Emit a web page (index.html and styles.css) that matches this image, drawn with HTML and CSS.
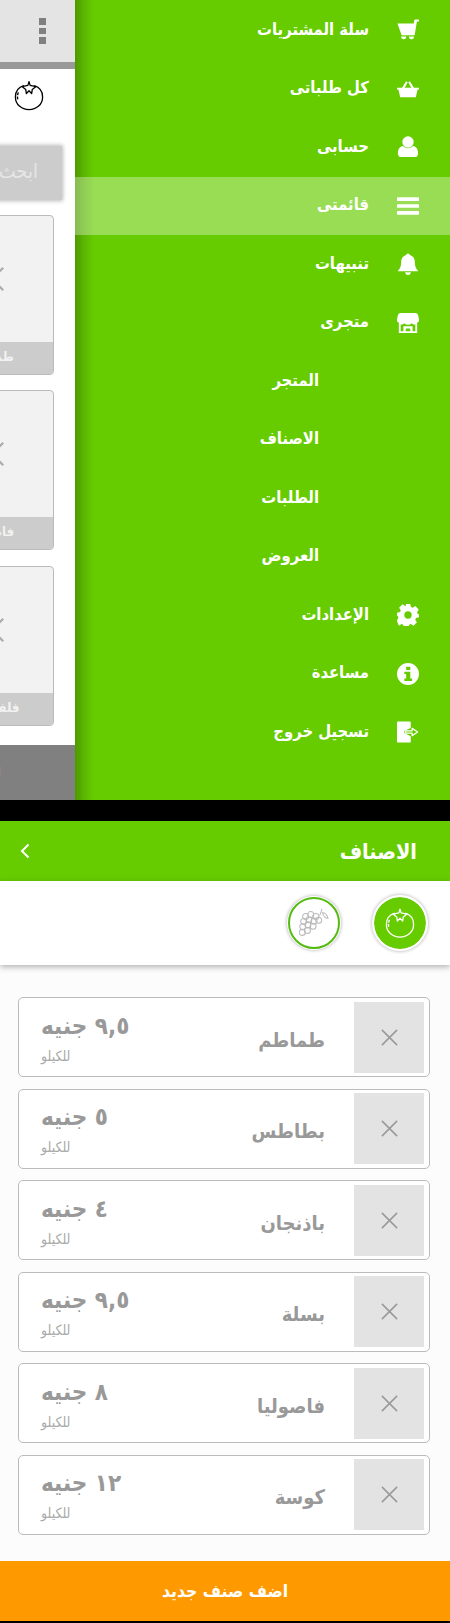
FILE: index.html
```html
<!DOCTYPE html>
<html lang="ar" dir="rtl">
<head>
<meta charset="utf-8">
<title>الاصناف</title>
<link rel="stylesheet" href="styles.css">
</head>
<body>
<svg class="defs" width="0" height="0" aria-hidden="true">
  <symbol id="tomato" viewBox="0 0 32 32">
    <path d="M10.500 5.500C5 7.200 1.500 11.500 1.500 17.500 1.500 25.500 8 31 16 31s14.500-5.500 14.500-13.500C30.500 11.500 27 7.200 21.500 5.500" fill="none" stroke="currentColor" stroke-width="1.400"/>
    <path d="M16 1.200l-1.200 4-6.300 1.300 4 3 .7 4.500 2.800-3 2.800 3 .7-4.500 4-3-6.300-1.300z" fill="none" stroke="currentColor" stroke-width="1.400" stroke-linejoin="round"/>
    <path d="M4 20c-.6-3-.3-5.500 1-8" fill="none" stroke="currentColor" stroke-width="1.400" stroke-dasharray="3 1.500"/>
  </symbol>
  <symbol id="x" viewBox="0 0 20 20">
    <path d="M2 2l16 16M18 2L2 18" fill="none" stroke="currentColor" stroke-width="1.600"/>
  </symbol>
</svg>

<section class="drawer">
  <aside class="under">
    <div class="under-bar"><span class="dots"><i></i><i></i><i></i></span></div>
    <div class="under-line"></div>
    <div class="under-body">
      <svg class="under-tomato"><use href="#tomato"/></svg>
      <div class="search">ابحث</div>
      <div class="tile"><div class="tile-img"><svg class="tile-x"><use href="#x"/></svg></div><div class="tile-cap">طماطم</div></div>
      <div class="tile"><div class="tile-img"><svg class="tile-x"><use href="#x"/></svg></div><div class="tile-cap">فاصوليا</div></div>
      <div class="tile"><div class="tile-img"><svg class="tile-x"><use href="#x"/></svg></div><div class="tile-cap">فلفل حار</div></div>
    </div>
    <div class="under-foot"><span>اضف</span></div>
  </aside>

  <nav class="menu">
    <a class="row">
      <svg class="ico" viewBox="0 0 24 24"><path d="M24 .5v2.300h-2.300l-2.300 14c-.1.600-.6 1-1.200 1H5L.5 5h17.800l.5-3.300c.1-.700.600-1.200 1.300-1.200zM4.500 19h5.500a2.800 2.800 0 0 1-5.500 1zm8.500 0h5.500a2.800 2.800 0 0 1-5.500 1z"/></svg>
      <span>سلة المشتريات</span>
    </a>
    <a class="row">
      <svg class="ico" viewBox="0 0 24 24"><path d="M0 10.500h5.500L10 3.500l1.700 1.200-3.300 5.800h7.200l-3.300-5.800L14 3.500l4.500 7H24v2h-1.500L20.500 21h-17L1.500 12.500H0z"/></svg>
      <span>كل طلباتى</span>
    </a>
    <a class="row">
      <svg class="ico" viewBox="0 0 24 24"><circle cx="12" cy="6.500" r="6.200"/><path d="M1 19c0-4.500 2-7.500 5.500-8 3 3 8 3 11 0 3.500.500 5.500 3.500 5.500 8 0 2.500-1.500 4-3.500 4h-15C2.500 23 1 21.500 1 19z"/></svg>
      <span>حسابى</span>
    </a>
    <a class="row active">
      <svg class="ico" viewBox="0 0 24 24"><rect y="2.500" width="24" height="4" rx=".5"/><rect y="10" width="24" height="4" rx=".5"/><rect y="17.500" width="24" height="4" rx=".5"/></svg>
      <span>قائمتى</span>
    </a>
    <a class="row">
      <svg class="ico" viewBox="0 0 24 24"><path d="M12 .5a2 2 0 0 1 2 1.800c3.500.800 5.500 3.700 5.500 7.700 0 5 1.500 7 3.500 9.500v.5H1v-.5C3 17 4.500 15 4.500 10c0-4 2-6.900 5.500-7.700A2 2 0 0 1 12 .5zM9 21h6a3 3 0 0 1-6 0z"/></svg>
      <span>تنبيهات</span>
    </a>
    <a class="row">
      <svg class="ico" viewBox="0 0 24 24"><path fill-rule="evenodd" d="M4 1h16a3 3 0 0 1 3 2.500L24 8a3 3 0 0 1-2 3.500V23H2V11.500A3 3 0 0 1 0 8l1-4.500A3 3 0 0 1 4 1zm0 12.500V21h3v-5.500h10V21h3v-7.500a4 4 0 0 1-4-1.300 5.500 5.500 0 0 1-8 0 4 4 0 0 1-4 1.300zM9.500 18v3h5v-3z"/></svg>
      <span>متجرى</span>
    </a>
    <a class="row sub"><span>المتجر</span></a>
    <a class="row sub"><span>الاصناف</span></a>
    <a class="row sub"><span>الطلبات</span></a>
    <a class="row sub"><span>العروض</span></a>
    <a class="row">
      <svg class="ico" viewBox="0 0 24 24"><path fill-rule="evenodd" d="M9.500 0h5l.7 3.300 1.900.8L20 2.300 23.700 6l-1.800 2.900.8 1.900L24 11.500v3l-3.300.7-.8 1.900 1.800 2.900-3.700 3.700-2.900-1.800-1.900.8-.7 3.300h-5l-.7-3.300-1.900-.8-2.900 1.800L-.2 18l1.800-2.900-.8-1.900L0 12.500v-3l3.300-.7.800-1.900L2.300 4 6 .3l2.900 1.800 1-.4zM12 8a4 4 0 1 0 0 8 4 4 0 0 0 0-8z"/></svg>
      <span>الإعدادات</span>
    </a>
    <a class="row">
      <svg class="ico" viewBox="0 0 24 24"><path fill-rule="evenodd" d="M12 0a12 12 0 1 1 0 24 12 12 0 0 1 0-24zM10 4v3.500h4.500V4zM8 9.500V12h2v5H8v2.500h8.500V17h-2V9.500z"/></svg>
      <span>مساعدة</span>
    </a>
    <a class="row">
      <svg class="ico" viewBox="0 0 24 24"><path fill-rule="evenodd" d="M1 .5h13a1 1 0 0 1 1 1V7.500L8 11v2l7 3.500v6a1 1 0 0 1-1 1H1a1 1 0 0 1-1-1v-21a1 1 0 0 1 1-1z"/><path d="M9.500 10.700h7V8l6 4-6 4v-2.700h-7z" fill="none" stroke="#fff" stroke-width="1.400" stroke-linejoin="round"/></svg>
      <span>تسجيل خروج</span>
    </a>
  </nav>
</section>

<section class="screen">
  <header class="top">
    <h1>الاصناف</h1>
    <svg class="back" viewBox="0 0 10 16"><path d="M8.500 1.500L2 8l6.500 6.500" fill="none" stroke="currentColor" stroke-width="2"/></svg>
  </header>

  <div class="tabs">
    <button class="tab on"><svg class="tab-ico"><use href="#tomato"/></svg></button>
    <button class="tab off">
      <svg class="tab-ico grapes" viewBox="0 0 32 32" fill="none" stroke="currentColor" stroke-width="1.100">
        <circle cx="7" cy="9" r="3.200"/><circle cx="12.500" cy="7" r="3.200"/><circle cx="18" cy="9" r="3.200"/>
        <circle cx="5" cy="14.500" r="3.200"/><circle cx="10.500" cy="12.500" r="3.200"/><circle cx="16" cy="14" r="3.200"/><circle cx="21" cy="13" r="3.200"/>
        <circle cx="4" cy="20" r="3.200"/><circle cx="9.500" cy="18" r="3.200"/><circle cx="15" cy="19.500" r="3.200"/>
        <circle cx="3.500" cy="26" r="3.200"/><circle cx="9" cy="24" r="3.200"/>
        <path d="M22 8c1-2 2-4 2.500-7M25 5c3 0 5 2.500 6 6-3 0-5-2-6-6z"/>
      </svg>
    </button>
  </div>

  <div class="list">
    <article class="item"><div class="del"><svg class="del-x"><use href="#x"/></svg></div><div class="name">طماطم</div><div class="price"><b>٩,٥ جنيه</b><small>للكيلو</small></div></article>
    <article class="item"><div class="del"><svg class="del-x"><use href="#x"/></svg></div><div class="name">بطاطس</div><div class="price"><b>٥ جنيه</b><small>للكيلو</small></div></article>
    <article class="item"><div class="del"><svg class="del-x"><use href="#x"/></svg></div><div class="name">باذنجان</div><div class="price"><b>٤ جنيه</b><small>للكيلو</small></div></article>
    <article class="item"><div class="del"><svg class="del-x"><use href="#x"/></svg></div><div class="name">بسلة</div><div class="price"><b>٩,٥ جنيه</b><small>للكيلو</small></div></article>
    <article class="item"><div class="del"><svg class="del-x"><use href="#x"/></svg></div><div class="name">فاصوليا</div><div class="price"><b>٨ جنيه</b><small>للكيلو</small></div></article>
    <article class="item"><div class="del"><svg class="del-x"><use href="#x"/></svg></div><div class="name">كوسة</div><div class="price"><b>١٢ جنيه</b><small>للكيلو</small></div></article>
  </div>

  <button class="add">اضف صنف جديد</button>
</section>
</body>
</html>
```

FILE: styles.css
```css
* { box-sizing: border-box; }

html, body {
  margin: 0;
  padding: 0;
}

body {
  width: 450px;
  height: 1623px;
  background: #000;
  font-family: "DejaVu Sans Condensed", "DejaVu Sans", "Noto Sans", sans-serif;
  overflow: hidden;
}

.defs { position: absolute; }

/* top screenshot: open drawer */
.drawer {
  display: flex;
  flex-direction: row-reverse;
  height: 800px;
  margin-bottom: 21px;
}

.under {
  width: 75px;
  flex: none;
  display: flex;
  flex-direction: column;
  overflow: hidden;
  background: #fff;
}

.under-bar {
  height: 62px;
  flex: none;
  background: #e4e4e4;
  display: flex;
  justify-content: flex-start;
  align-items: center;
  padding-right: 29px;
}

.dots {
  display: flex;
  flex-direction: column;
  gap: 3px;
}

.dots i {
  display: block;
  width: 7px;
  height: 6.500px;
  background: #808080;
}

.under-line {
  height: 7px;
  flex: none;
  background: #999;
}

.under-body {
  flex: 1;
  display: flex;
  flex-direction: column;
  align-items: flex-start;
  padding-right: 21px;
  min-height: 0;
}

.under-tomato {
  width: 30px;
  height: 31px;
  margin: 11px 10px 0 0;
  color: #000;
  flex: none;
}

.search {
  width: 130px;
  height: 54px;
  flex: none;
  margin: 35px -8px 0 0;
  background: #ccc;
  box-shadow: 0 0 4px 1px #bbb;
  color: #e6e6e6;
  font-size: 20px;
  line-height: 50px;
  padding-right: 24px;
}

.tile {
  width: 124px;
  height: 160px;
  flex: none;
  margin-top: 15.500px;
  border: 1px solid #bbb;
  border-radius: 4px;
  background: #f2f2f2;
  display: flex;
  flex-direction: column;
  overflow: hidden;
}

.search + .tile { margin-top: 14.500px; }

.tile-img {
  flex: 1;
  display: flex;
  align-items: center;
  justify-content: center;
}

.tile-x {
  width: 28px;
  height: 28px;
  color: #aaa;
}

.tile-cap {
  height: 32px;
  flex: none;
  background: #ccc;
  color: #f2f2f2;
  font-size: 13px;
  line-height: 30px;
  text-align: center;
  font-weight: bold;
  white-space: nowrap;
}

.under-foot {
  height: 55px;
  flex: none;
  margin-top: auto;
  background: #808080;
  color: #ddd;
  font-size: 15px;
  line-height: 55px;
  padding-right: 74px;
  white-space: nowrap;
}

.menu {
  flex: 1;
  padding-top: 1px;
  background: linear-gradient(to right, #4d9900 0, #5cb800 10px, #66cc00 19px);
  color: #fff;
}

.row {
  display: flex;
  align-items: center;
  height: 58.500px;
  padding-right: 31px;
  gap: 28px;
  font-size: 16.500px;
  font-weight: bold;
  white-space: nowrap;
}

.row span { padding-bottom: 2px; }

.row.active { background: rgba(255, 255, 255, .33); }

.row.sub { padding-right: 131px; }

.ico {
  width: 22px;
  height: 22px;
  flex: none;
  fill: #fff;
}

/* bottom screenshot: item list */
.screen {
  height: 800px;
  display: flex;
  flex-direction: column;
  background: #fcfcfc;
}

.top {
  height: 60px;
  flex: none;
  background: #66cc00;
  color: #fff;
  display: flex;
  align-items: center;
  justify-content: space-between;
  padding: 0 33px 0 20px;
}

.top h1 {
  margin: 0;
  font-size: 21.500px;
  font-weight: bold;
}

.back {
  width: 10px;
  height: 16px;
}

.tabs {
  height: 84px;
  flex: none;
  background: #fff;
  box-shadow: 0 2px 6px rgba(0, 0, 0, .3);
  display: flex;
  align-items: center;
  gap: 32px;
  padding-right: 22px;
}

.tab {
  border-radius: 50%;
  padding: 0;
  display: flex;
  align-items: center;
  justify-content: center;
  background: #fff;
}

.tab.on {
  width: 56px;
  height: 56px;
  border: 2px solid #fff;
  background: #66cc00;
  background-clip: padding-box;
  box-shadow: 0 0 3px 1px #ccc;
  color: #fff;
}

.tab.off {
  width: 52px;
  height: 52px;
  border: 2px solid #55bb11;
  box-shadow: 0 0 0 1px #fff, 0 0 3px 2px #ccc;
  color: #bbb;
}

.tab-ico {
  width: 30px;
  height: 30px;
}

.list {
  display: flex;
  flex-direction: column;
  gap: 11.600px;
  padding: 32px 20px 0 18px;
}

.item {
  height: 80px;
  display: flex;
  align-items: center;
  background: #fff;
  border: 1px solid #bbb;
  border-radius: 5px;
  padding: 0 5px 0 22px;
}

.del {
  width: 70px;
  height: 71px;
  flex: none;
  background: #e3e3e3;
  display: flex;
  align-items: center;
  justify-content: center;
}

.del-x {
  width: 19px;
  height: 19px;
  color: #999;
}

.name {
  margin: 5px 29px 0 0;
  font-size: 20px;
  font-weight: bold;
  color: #999;
}

.price {
  margin-right: auto;
  display: flex;
  flex-direction: column;
  align-items: flex-end;
  color: #999;
}

.price b { font-size: 24px; line-height: 30px; }

.price small {
  font-size: 14px;
  line-height: 16px;
  color: #aaa;
  margin-top: 7px;
}

.add {
  margin-top: auto;
  height: 60px;
  flex: none;
  border: 0;
  background: #ff9900;
  color: #fff;
  font-family: inherit;
  font-size: 17.500px;
  font-weight: bold;
}
```
